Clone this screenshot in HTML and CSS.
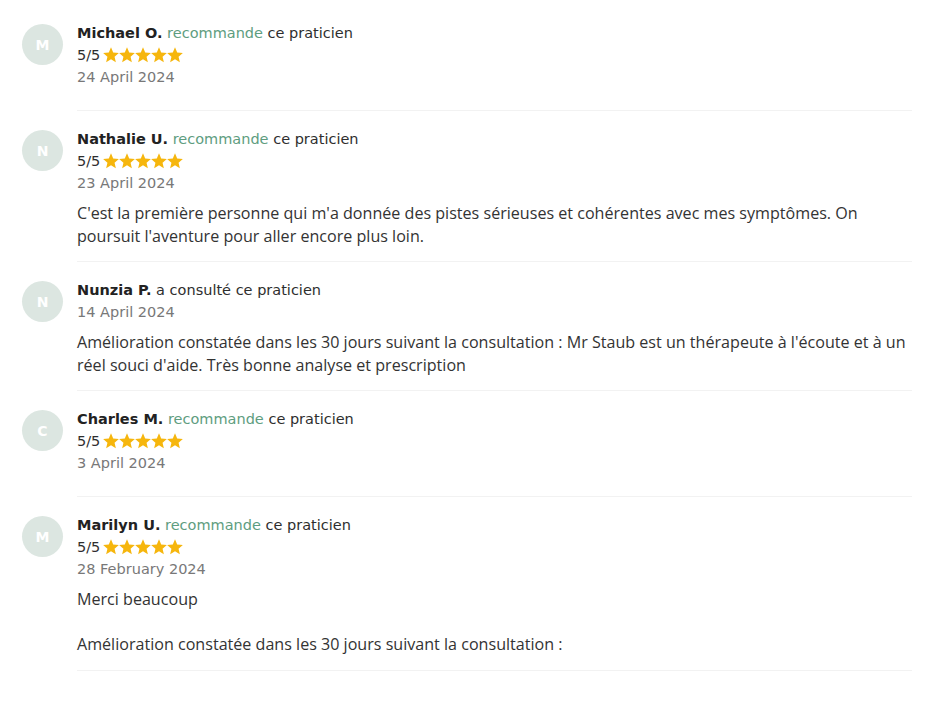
FILE: index.html
```html
<!DOCTYPE html>
<html lang="fr">
<head>
  <meta charset="UTF-8">
  <title>Avis patients</title>
  <link rel="stylesheet" href="styles.css">
</head>
<body>

<div class="reviews">

  <div class="review">
    <div class="avatar">M</div>
    <div class="review-body">
      <div class="review-head">
        <div class="author"><strong>Michael O.</strong> <span class="reco">recommande</span> ce praticien</div>
        <div class="rating">5/5 <span class="stars"></span></div>
        <div class="date">24 April 2024</div>
      </div>
    </div>
  </div>

  <div class="review">
    <div class="avatar">N</div>
    <div class="review-body">
      <div class="review-head">
        <div class="author"><strong>Nathalie U.</strong> <span class="reco">recommande</span> ce praticien</div>
        <div class="rating">5/5 <span class="stars"></span></div>
        <div class="date">23 April 2024</div>
      </div>
      <p class="comment">C'est la première personne qui m'a donnée des pistes sérieuses et cohérentes avec mes symptômes. On poursuit l'aventure pour aller encore plus loin.</p>
    </div>
  </div>

  <div class="review">
    <div class="avatar">N</div>
    <div class="review-body">
      <div class="review-head">
        <div class="author"><strong>Nunzia P.</strong> a consulté ce praticien</div>
        <div class="date">14 April 2024</div>
      </div>
      <p class="comment">Amélioration constatée dans les 30 jours suivant la consultation : Mr Staub est un thérapeute à l'écoute et à un réel souci d'aide. Très bonne analyse et prescription</p>
    </div>
  </div>

  <div class="review">
    <div class="avatar">C</div>
    <div class="review-body">
      <div class="review-head">
        <div class="author"><strong>Charles M.</strong> <span class="reco">recommande</span> ce praticien</div>
        <div class="rating">5/5 <span class="stars"></span></div>
        <div class="date">3 April 2024</div>
      </div>
    </div>
  </div>

  <div class="review">
    <div class="avatar">M</div>
    <div class="review-body">
      <div class="review-head">
        <div class="author"><strong>Marilyn U.</strong> <span class="reco">recommande</span> ce praticien</div>
        <div class="rating">5/5 <span class="stars"></span></div>
        <div class="date">28 February 2024</div>
      </div>
      <p class="comment">Merci beaucoup<br><br>Amélioration constatée dans les 30 jours suivant la consultation :</p>
    </div>
  </div>

</div>

<script>
// Fill the star ratings
const star = '<svg viewBox="0 0 24 24" width="16" height="16"><path d="M12 .4L15.29 8.27 23.79 8.97 17.33 14.53 19.29 22.83 12 18.4 4.71 22.83 6.67 14.53 .21 8.97 8.71 8.27z" fill="#f6b60d"/></svg>';
document.querySelectorAll('.stars').forEach(el => {
  el.innerHTML = star.repeat(5);
});
</script>

</body>
</html>
```

FILE: styles.css
```css
:root {
  --text: #2e2e2e;
  --muted: #787878;
  --green: #5e9d80;
  --line: #f2f2f2;
  --avatar: #dce6e1;
}

* {
  box-sizing: border-box;
}

body {
  margin: 0;
  background: #fff;
  color: var(--text);
  font-family: 'DejaVu Sans', sans-serif;
  font-size: 14.5px;
}

.reviews {
  padding: 5px 21px 0 22px;
}

.review {
  display: flex;
  gap: 14px;
  padding-top: 17px;
}

.avatar {
  flex: 0 0 41px;
  width: 41px;
  height: 41px;
  margin-top: 2px;
  border-radius: 50%;
  background: var(--avatar);
  color: #fff;
  font-weight: 600;
  font-size: 14px;
  display: flex;
  align-items: center;
  justify-content: center;
}

.review-body {
  flex: 1;
  padding-bottom: 14px;
  border-bottom: 1px solid var(--line);
}

.review-head {
  margin-bottom: 8px;
}

.author,
.rating,
.date {
  height: 22px;
  line-height: 22px;
}

.author strong {
  font-weight: 700;
  color: #222;
}

.reco {
  color: var(--green);
}

.rating {
  display: flex;
  align-items: center;
  gap: 3px;
}

.stars {
  display: flex;
}

.stars svg {
  display: block;
}

.date {
  color: var(--muted);
}

.comment {
  margin: 0;
  padding-right: 4px;
  font-family: 'Open Sans', sans-serif;
  font-size: 16.1px;
  line-height: 22.5px;
  color: #333;
}
```
